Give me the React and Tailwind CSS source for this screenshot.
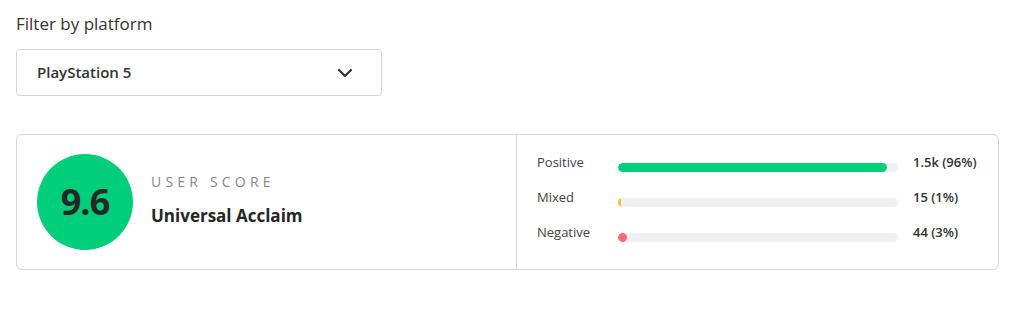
import { ChevronDown } from "lucide-react";

const rows = [
  { label: "Positive", value: "1.5k (96%)", pct: 96, color: "bg-[#00ce7a]" },
  { label: "Mixed", value: "15 (1%)", pct: 1, color: "bg-[#ffbd3f]" },
  { label: "Negative", value: "44 (3%)", pct: 3, color: "bg-[#ff6874]" },
];

const App = () => {
  return (
    <div
      className="w-[1024px] h-[311px] bg-white px-4 pt-[12px] text-[#262626]"
      style={{ fontFamily: "'Open Sans', Lato, sans-serif" }}
    >
      <h2 className="text-[17px] leading-6 text-[#333]">Filter by platform</h2>
      <div className="mt-[13px] w-[366px] h-[47px] border border-[#d6d6d6] rounded-[4px] flex items-center justify-between pl-5 pr-6">
        <span className="text-[15px] font-semibold text-[#333]">PlayStation 5</span>
        <ChevronDown size={24} strokeWidth={2.2} className="text-[#333]" />
      </div>

      <div className="mt-[38px] w-[983px] h-[136px] border border-[#d6d6d6] rounded-[6px] flex">
        <div className="w-[500px] border-r border-[#d6d6d6] flex items-center pl-5">
          <div className="w-[96px] h-[96px] rounded-full bg-[#00ce7a] flex items-center justify-center">
            <span className="text-[36px] font-bold text-[#262626] tracking-tight">9.6</span>
          </div>
          <div className="ml-[18px] flex flex-col -mt-[5px]">
            <span className="text-[14px] tracking-[0.3em] text-[#888] uppercase leading-5">User Score</span>
            <span className="mt-[12px] text-[17px] font-bold text-[#262626] leading-6">Universal Acclaim</span>
          </div>
        </div>
        <div className="flex-1 flex flex-col justify-center gap-[16px] pl-5 pr-5 -mt-[8px]">
          {rows.map((r) => (
            <div key={r.label} className="flex items-center h-[19px]">
              <span className="w-[81px] text-[13px] text-[#444]">{r.label}</span>
              <div className="w-[280px] h-[9px] rounded-full bg-[#f0f0f0] mt-[8px] overflow-hidden">
                <div
                  className={`h-full rounded-full ${r.color} min-w-[3px]`}
                  style={{ width: r.pct === 3 ? "9px" : `${r.pct}%` }}
                />
              </div>
              <span className="ml-[15px] text-[13px] font-semibold text-[#333]">{r.value}</span>
            </div>
          ))}
        </div>
      </div>
    </div>
  );
};

export default App;
